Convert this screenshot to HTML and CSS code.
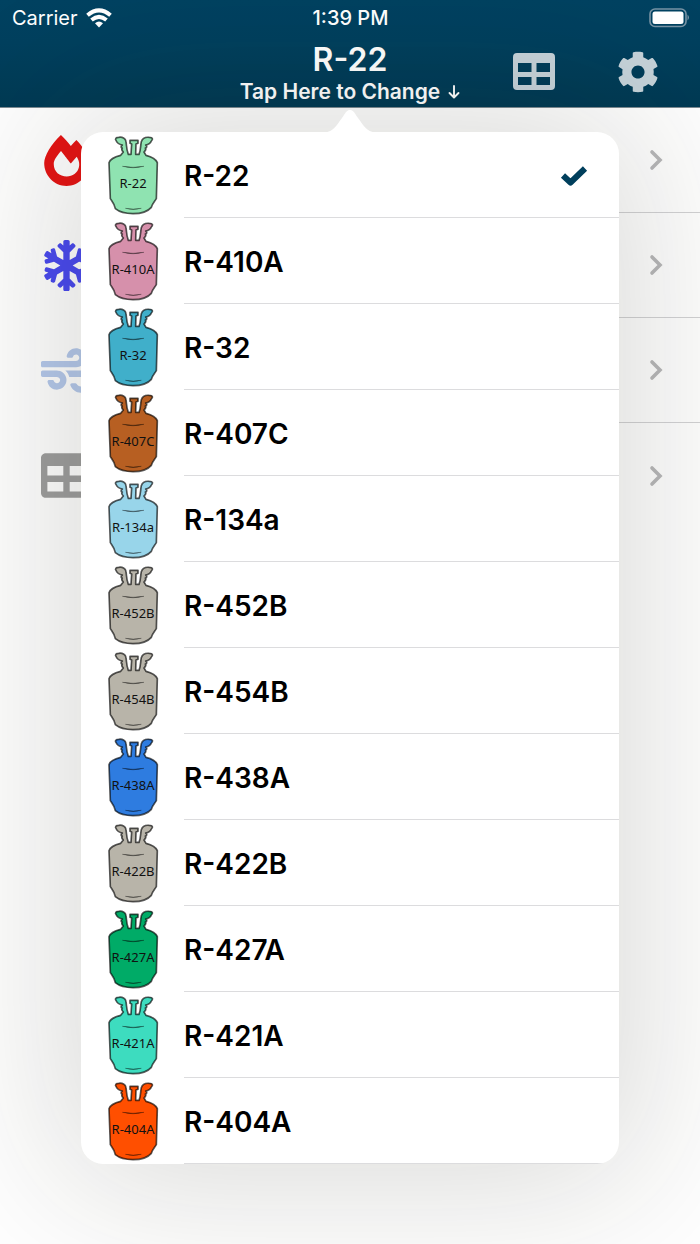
FILE: index.html
```html
<!DOCTYPE html>
<html lang="en">
<head>
<meta charset="utf-8">
<meta name="viewport" content="width=device-width, initial-scale=1">
<title>Refrigerants</title>
<link rel="stylesheet" href="styles.css">
</head>
<body>
<svg class="defs" aria-hidden="true">
  <symbol id="tank" viewBox="0 6 198 258">
    <path stroke-width="5" stroke-linejoin="round" d="M62 76L70 66C66 62 63 58 67 54C62 53 62 49 67 45C58 43 51 38 49 33C43 26 49 22 56 22C67 20 77 25 78 35C80 48 79 58 85 73L93 73L95 42L90 40L90 31L114 31L114 40L108 42L107 73L117 73C123 58 121 48 124 35C127 25 138 21 148 22C158 22 160 27 154 33C151 41 144 44 137 45C142 49 141 53 136 54C140 59 136 62 132 66L138 76C154 80 168 88 172 98L169 206C164 214 156 222 154 232C142 246 118 251 99 251C80 251 58 246 46 236C44 222 36 214 31 206L27 98C30 88 46 80 62 76Z"/>
    <path class="crease" d="M67 109Q99 118 132 109Q99 114 67 109ZM76 235Q99 242 124 235Q99 239 76 235Z"/>
  </symbol>
  <symbol id="chevron" viewBox="0 0 14 22"><path d="M3 3L11 11L3 19" fill="none" stroke="currentColor" stroke-width="3.6" stroke-linecap="round"/></symbol>
</svg>

<header class="topbar">
  <div class="status">
    <div class="carrier">Carrier
      <svg width="26" height="20" viewBox="0 0 26 20" fill="none" stroke="#fff" stroke-width="4"><path d="M1.5 7.3Q13 -2.500 24.5 7.3"/><path d="M5.5 12Q13 5.8 20.500 12"/><path d="M9 15.300Q13 11.500 17 15.300L13 19.400Z" fill="#fff" stroke="none"/></svg>
    </div>
    <time>1:39 PM</time>
    <svg class="battery" width="40" height="20" viewBox="0 0 40 20"><rect x="1" y="1" width="36" height="17.500" rx="5" fill="none" stroke="#7894a5" stroke-width="1.6"/><rect x="3.5" y="3.5" width="31" height="12.500" rx="2.5" fill="#fff"/><path d="M38.500 6.5Q41.500 9.500 38.500 12.500Z" fill="#7894a5"/></svg>
  </div>
  <div class="nav">
    <button class="title" type="button"><strong>R-22</strong><span>Tap Here to Change
      <svg width="12" height="14" viewBox="0 0 12 14" fill="none" stroke="currentColor" stroke-width="1.900" stroke-linecap="round" stroke-linejoin="round"><path d="M6 1V12M1.500 8L6 12.500L10.500 8"/></svg></span></button>
    <div class="tools">
      <button type="button" aria-label="Table"><svg width="42" height="42" viewBox="0 0 42 42" fill="currentColor" fill-rule="evenodd"><path d="M4 2H38Q42 2 42 6V35Q42 39 38 39H4Q0 39 0 35V6Q0 2 4 2ZM5 12V21H18.500V12ZM23.500 12V21H37V12ZM5 26V34H18.500V26ZM23.500 26V34H37V26Z"/></svg></button>
      <button type="button" aria-label="Settings"><svg width="42" height="42" viewBox="0 0 512 512" fill="currentColor"><path d="M487.4 315.7l-42.6-24.6c4.3-23.2 4.3-47 0-70.2l42.6-24.6c4.900-2.800 7.100-8.600 5.500-14-11.100-35.600-30-67.800-54.700-94.600-3.800-4.100-10-5.100-14.800-2.300L380.800 110c-17.900-15.400-38.500-27.300-60.800-35.100V25.800c0-5.600-3.900-10.500-9.400-11.700-36.700-8.200-74.300-7.800-109.200 0-5.500 1.200-9.400 6.100-9.400 11.700V75c-22.200 7.900-42.800 19.800-60.800 35.100L88.700 85.500c-4.900-2.800-11-1.900-14.800 2.300-24.700 26.700-43.600 58.900-54.700 94.600-1.700 5.400.6 11.200 5.500 14L67.300 221c-4.300 23.200-4.300 47 0 70.200l-42.600 24.600c-4.900 2.800-7.100 8.600-5.500 14 11.100 35.600 30 67.800 54.700 94.600 3.800 4.100 10 5.100 14.800 2.300l42.600-24.600c17.900 15.400 38.500 27.300 60.800 35.100v49.200c0 5.600 3.900 10.500 9.400 11.700 36.700 8.200 74.300 7.800 109.200 0 5.500-1.200 9.400-6.100 9.400-11.700v-49.200c22.200-7.900 42.800-19.800 60.800-35.100l42.600 24.600c4.900 2.800 11 1.900 14.800-2.300 24.700-26.700 43.600-58.900 54.700-94.600 1.500-5.500-.7-11.300-5.600-14.100zM256 336c-44.100 0-80-35.900-80-80s35.900-80 80-80 80 35.900 80 80-35.900 80-80 80z"/></svg></button>
    </div>
  </div>
</header>

<main class="page">
  <ul class="menu">
    <li><svg class="icon fire" viewBox="-32 0 512 512"><path d="M323.560 51.200c-20.800 19.300-39.580 39.590-56.220 59.970C240.080 73.620 206.280 35.530 168 0 69.740 91.170 0 209.960 0 281.600 0 408.850 100.290 512 224 512s224-103.150 224-230.400c0-53.270-51.980-163.140-124.440-230.400zm-19.470 340.650C282.430 407.010 255.720 416 226.860 416 154.710 416 96 368.260 96 290.750c0-38.610 24.310-72.630 72.790-130.750 6.930 7.980 98.830 125.340 98.830 125.340l58.630-66.880c4.140 6.850 7.910 13.550 11.270 19.970 27.350 52.190 15.810 118.970-33.430 153.420z"/></svg><div class="rest"><svg class="chev"><use href="#chevron"/></svg></div></li>
    <li><svg class="icon snow" viewBox="-32 0 512 512"><path d="M440.300 345.200l-33.800-19.500 26-7c8.200-2.200 13.100-10.700 10.900-18.900l-4-14.900c-2.200-8.200-10.700-13.100-18.900-10.900l-70.800 19-63.900-37 63.800-36.900 70.800 19c8.200 2.200 16.700-2.700 18.900-10.900l4-14.900c2.200-8.200-2.700-16.700-10.900-18.900l-26-7 33.800-19.500c7.400-4.300 9.900-13.700 5.700-21.100L430.400 119c-4.300-7.400-13.700-9.900-21.100-5.700l-33.800 19.500 7-26c2.200-8.200-2.700-16.700-10.900-18.900l-14.900-4c-8.200-2.200-16.700 2.700-18.900 10.900l-19 70.800-62.800 36.200v-77.500l53.700-53.100c6.200-6.200 6.200-16.400 0-22.600l-11.300-11.300c-6.200-6.200-16.400-6.200-22.600 0L256 56.400V16c0-8.800-7.200-16-16-16h-32c-8.800 0-16 7.200-16 16v40.400l-19.700-19.700c-6.200-6.200-16.400-6.200-22.600 0L138.300 48c-6.300 6.200-6.300 16.400 0 22.600l53.700 53.100v77.500l-62.800-36.200-19-70.800c-2.200-8.200-10.700-13.100-18.900-10.900l-14.900 4c-8.200 2.200-13.100 10.700-10.900 18.900l7 26-33.800-19.500c-7.400-4.300-16.800-1.700-21.100 5.700L2.100 145.700c-4.300 7.400-1.700 16.800 5.700 21.100l33.800 19.500-26 7c-8.300 2.200-13.200 10.700-11 19l4 14.900c2.200 8.200 10.700 13.100 18.900 10.900l70.800-19 63.800 36.900-63.800 36.900-70.800-19c-8.200-2.200-16.700 2.700-18.900 10.900l-4 14.900c-2.200 8.200 2.700 16.700 10.900 18.900l26 7-33.800 19.600c-7.400 4.300-9.900 13.700-5.700 21.100l15.500 26.800c4.300 7.400 13.700 9.900 21.100 5.700l33.800-19.500-7 26c-2.200 8.200 2.700 16.700 10.900 18.900l14.900 4c8.200 2.200 16.700-2.700 18.900-10.900l19-70.800 62.800-36.200v77.500l-53.700 53.100c-6.300 6.200-6.300 16.400 0 22.600l11.300 11.300c6.200 6.200 16.400 6.200 22.600 0l19.700-19.700V496c0 8.800 7.200 16 16 16h32c8.800 0 16-7.200 16-16v-40.400l19.700 19.700c6.200 6.200 16.400 6.200 22.600 0l11.300-11.300c6.200-6.200 6.200-16.400 0-22.600L256 387.700v-77.500l62.800 36.200 19 70.800c2.200 8.200 10.700 13.100 18.900 10.900l14.900-4c8.200-2.200 13.100-10.700 10.900-18.900l-7-26 33.800 19.500c7.400 4.300 16.800 1.700 21.100-5.700l15.500-26.800c4.300-7.300 1.800-16.800-5.600-21z"/></svg><div class="rest"><svg class="chev"><use href="#chevron"/></svg></div></li>
    <li><svg class="icon wind" viewBox="0 0 512 512"><path d="M156.700 256H16c-8.800 0-16 7.200-16 16v32c0 8.800 7.200 16 16 16h142.200c15.900 0 30.800 10.900 33.400 26.600 3.300 20-12.100 37.400-31.600 37.400-14.100 0-26.100-9.200-30.400-21.900-2.100-6.300-8.600-10.100-15.200-10.100H81.600c-9.800 0-17.700 8.800-15.900 18.400 8.600 44.100 47.600 77.600 94.200 77.600 57.100 0 102.700-50.100 95.200-108.600C249 291 205.400 256 156.700 256zM16 224h336c59.700 0 106.800-54.800 93.800-116.700-7.600-36.200-36.900-65.500-73.100-73.100-55.400-11.600-105.100 24.900-114.900 75.500-1.900 9.600 6.100 18.300 15.800 18.300h32.800c6.700 0 13.100-3.800 15.200-10.100C325.900 105.200 337.900 96 352 96c19.400 0 34.900 17.400 31.600 37.400-2.600 15.700-17.400 26.600-33.400 26.600H16c-8.800 0-16 7.200-16 16v32c0 8.800 7.200 16 16 16zm384 32H243.700c19.300 16.600 33.200 38.800 39.800 64H400c26.500 0 48 21.500 48 48s-21.500 48-48 48c-17.900 0-33.300-9.900-41.600-24.400-2.900-5-8.700-7.600-14.500-7.600h-33.800c-10.900 0-19 10.800-15.300 21.100 17.800 50.600 70.500 84.800 129.400 72.300 41.200-8.700 75.100-41.600 84.700-82.700C526 321.500 470.500 256 400 256z"/></svg><div class="rest"><svg class="chev"><use href="#chevron"/></svg></div></li>
    <li><svg class="icon grid" viewBox="0 0 512 512"><path d="M464 32H48C21.490 32 0 53.490 0 80v352c0 26.510 21.490 48 48 48h416c26.510 0 48-21.490 48-48V80c0-26.510-21.490-48-48-48zM224 416H64v-96h160v96zm0-160H64v-96h160v96zm224 160H288v-96h160v96zm0-160H288v-96h160v96z"/></svg><div class="rest"><svg class="chev"><use href="#chevron"/></svg></div></li>
  </ul>

  <section class="popover" aria-label="Choose refrigerant">
    <svg class="arrow" width="52" height="24" viewBox="0 0 52 24"><path d="M0 24C10 22 12 17 18 9C22 3 23 1 26 1C29 1 30 3 34 9C40 17 42 22 52 24Z" fill="#fff"/></svg>
    <ul class="options">
      <li><button type="button"><svg class="tank green"><use href="#tank"/><text x="33" y="56">R-22</text></svg><span class="name">R-22<svg class="check" width="28" height="22" viewBox="0 0 28 22"><path d="M3 10.500L10.500 17.500L25 3.500" fill="none" stroke="#003f5c" stroke-width="6" stroke-linejoin="round"/></svg></span></button></li>
      <li><button type="button"><svg class="tank pink"><use href="#tank"/><text x="33" y="56">R-410A</text></svg><span class="name">R-410A</span></button></li>
      <li><button type="button"><svg class="tank teal"><use href="#tank"/><text x="33" y="56">R-32</text></svg><span class="name">R-32</span></button></li>
      <li><button type="button"><svg class="tank brown"><use href="#tank"/><text x="33" y="56">R-407C</text></svg><span class="name">R-407C</span></button></li>
      <li><button type="button"><svg class="tank sky"><use href="#tank"/><text x="33" y="56">R-134a</text></svg><span class="name">R-134a</span></button></li>
      <li><button type="button"><svg class="tank gray"><use href="#tank"/><text x="33" y="56">R-452B</text></svg><span class="name">R-452B</span></button></li>
      <li><button type="button"><svg class="tank gray"><use href="#tank"/><text x="33" y="56">R-454B</text></svg><span class="name">R-454B</span></button></li>
      <li><button type="button"><svg class="tank blue"><use href="#tank"/><text x="33" y="56">R-438A</text></svg><span class="name">R-438A</span></button></li>
      <li><button type="button"><svg class="tank gray"><use href="#tank"/><text x="33" y="56">R-422B</text></svg><span class="name">R-422B</span></button></li>
      <li><button type="button"><svg class="tank emerald"><use href="#tank"/><text x="33" y="56">R-427A</text></svg><span class="name">R-427A</span></button></li>
      <li><button type="button"><svg class="tank aqua"><use href="#tank"/><text x="33" y="56">R-421A</text></svg><span class="name">R-421A</span></button></li>
      <li><button type="button"><svg class="tank orange"><use href="#tank"/><text x="33" y="56">R-404A</text></svg><span class="name">R-404A</span></button></li>
    </ul>
  </section>
</main>
</body>
</html>
```

FILE: styles.css
```css
* { box-sizing: border-box; }
body {
  margin: 0;
  min-height: 100vh;
  display: flex;
  flex-direction: column;
  background: #fff;
  font-family: Inter, "Liberation Sans", sans-serif;
}
button { border: 0; padding: 0; background: none; font: inherit; color: inherit; cursor: pointer; }
ul { list-style: none; margin: 0; padding: 0; }
svg { display: block; flex: none; }
.defs { position: absolute; width: 0; height: 0; }

.topbar {
  background: linear-gradient(#004261, #00405e 40%, #003a54);
  color: #fff;
  border-bottom: 1px solid #7d8b93;
}
.status {
  display: grid;
  grid-template-columns: 1fr auto 1fr;
  align-items: center;
  height: 36px;
  padding: 0 11px 0 12px;
  font-size: 20px;
}
.status time { font-weight: 500; }
.carrier { display: flex; align-items: center; gap: 8px; }
.battery { justify-self: end; }
.nav {
  display: grid;
  grid-template-columns: 1fr auto 1fr;
  align-items: center;
  height: 71px;
}
.title {
  grid-column: 2;
  display: flex;
  flex-direction: column;
  align-items: center;
  color: #fff;
  font-weight: 600;
  font-size: 21px;
  line-height: 24px;
}
.title strong { font-size: 32px; line-height: 40px; font-weight: 600; }
.title span { display: flex; align-items: center; gap: 8px; }
.tools { display: flex; justify-content: flex-end; gap: 62px; padding-right: 41px; color: #c6d3da; }

.page { position: relative; flex: 1; }
.menu li { display: flex; padding-left: 41px; height: 105px; }
.icon { width: 51px; height: 51px; align-self: center; margin-right: 24px; }
.fire { fill: #e61414; }
.snow { fill: #4a4af0; }
.wind { fill: #b5c9ec; }
.grid { fill: #9e9e9e; }
.rest {
  flex: 1;
  display: flex;
  align-items: center;
  justify-content: flex-end;
  padding-right: 37px;
  border-bottom: 1px solid #d3d3d5;
}
.menu li:last-child .rest { border-bottom: 0; }
.chev { width: 14px; height: 22px; color: #b8b8ba; }

.popover { position: absolute; top: 24px; left: 81px; right: 81px; }
.arrow { position: absolute; top: -23px; left: calc(50% - 26px); z-index: 1; }
.options {
  background: #fff;
  border-radius: 22px;
  overflow: hidden;
  box-shadow: 0 0 160px 24px rgba(34, 34, 20, 0.16);
}
.options button { display: flex; width: 100%; height: 86px; padding-left: 19px; text-align: left; }
.tank { width: 66px; height: 86px; margin-right: 18px; stroke: rgba(0, 0, 0, 0.65); }
.tank text {
  fill: #111;
  stroke: none;
  font-family: "Noto Sans", sans-serif;
  font-size: 13px;
  text-anchor: middle;
}
.crease { fill: rgba(0, 0, 0, 0.6); stroke-width: 1; }
.green { fill: #8fe3b1; }
.pink { fill: #d690ab; }
.teal { fill: #40afca; }
.brown { fill: #b75f22; }
.sky { fill: #98d5ea; }
.gray { fill: #b8b4a9; }
.blue { fill: #2e7ce0; }
.emerald { fill: #00ab67; }
.aqua { fill: #3ddcbf; }
.orange { fill: #ff4f00; }
.name {
  flex: 1;
  display: flex;
  align-items: center;
  justify-content: space-between;
  padding: 2px 31px 0 0;
  border-bottom: 1px solid #dcdcde;
  color: #000;
  font-size: 28px;
  font-weight: 600;
}
```
